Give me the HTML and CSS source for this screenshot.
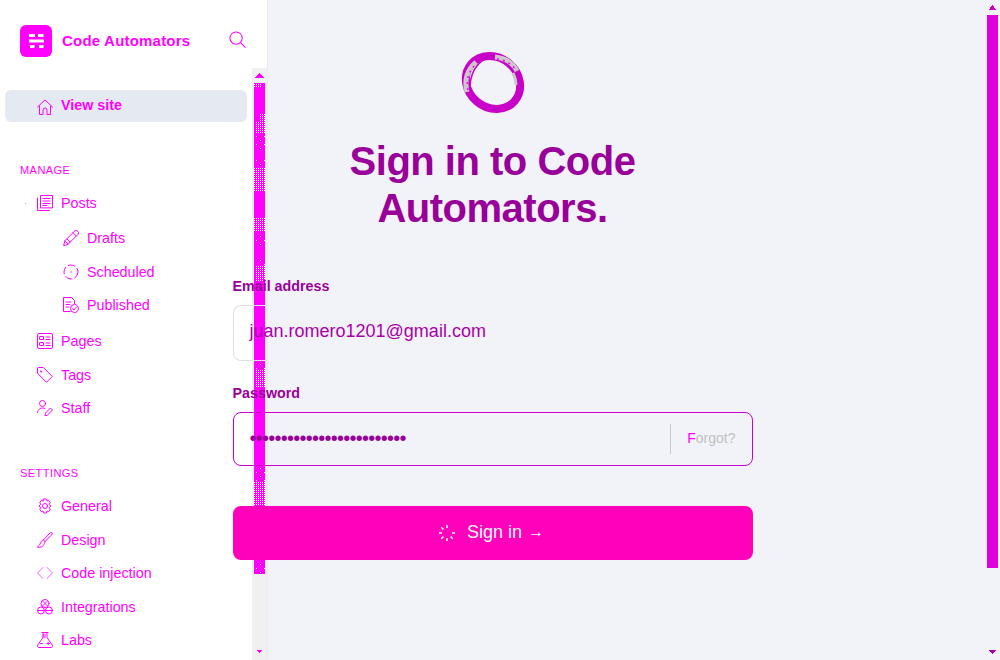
FILE: index.html
```html
<!DOCTYPE html>
<html lang="en">
<head>
<meta charset="utf-8">
<title>Code Automators</title>
<link rel="stylesheet" href="styles.css">
</head>
<body>
<div class="app">
  <aside class="sidebar">
    <header class="brand">
      <span class="logo">
        <svg viewBox="0 0 32 32" width="32" height="32"><path d="M9 9h6v3H9zM18 9h5.500v3H18zM9 14.500h15v3H9zM10 20h4.500v3H10zM19 20h4.500v3H19z" fill="#fff"/></svg>
      </span>
      <span class="brand-name">Code Automators</span>
      <svg class="search" viewBox="0 0 18 18" width="17" height="17"><circle cx="7.500" cy="7.500" r="6.500"/><path d="M12.200 12.200l5.300 5.300"/></svg>
    </header>
    <nav class="nav">
      <a class="row active">
        <svg class="ico" viewBox="0 0 16 16"><path d="M.5 8 8 1l7.500 7M2.500 7v8.500h3.500V11a2 2 0 0 1 4 0v4.500h3.500V7"/></svg>
        <span>View site</span>
      </a>
      <h2 class="section manage">Manage</h2>
      <a class="row">
        <span class="tiny"></span>
        <svg class="ico" viewBox="0 0 16 16"><path d="M3.500 12.500V.5h12v12zM.5 3v12.500h12M6 3.500h7M6 6h7M6 8.500h7M6 10.500h4"/></svg>
        <span>Posts</span>
      </a>
      <div class="sub">
        <a class="row subrow">
          <svg class="ico" viewBox="0 0 16 16"><path d="M.7 15.300l1.200-4.500L11.500 1.200a1.800 1.800 0 0 1 3.300 3.300L5.200 14.100zM2 10.800l3.200 3.300M10 2.700l3.300 3.300M4 9l3 3"/></svg>
          <span>Drafts</span>
        </a>
        <a class="row subrow">
          <svg class="ico" viewBox="0 0 16 16"><circle cx="8" cy="8" r="7" stroke-dasharray="7 3"/><path d="M8 8h.5"/></svg>
          <span>Scheduled</span>
        </a>
        <a class="row subrow">
          <svg class="ico" viewBox="0 0 16 16"><path d="M7 14.500H.5V.5h8l3 3v3M3 5h5M3 7.500h4M3 10h3"/><circle cx="11.500" cy="11.500" r="4"/><path d="M9.500 11.800l1.500 1.200 2.500-3"/></svg>
          <span>Published</span>
        </a>
      </div>
      <a class="row">
        <svg class="ico" viewBox="0 0 16 16"><rect x=".5" y=".5" width="15" height="15" rx="1.500"/><path d="M3 3.500h3.500v3H3zM3 9.500h3.500v3H3zM9 4h4M9 6.500h4M9 10h4M9 12.500h4"/></svg>
        <span>Pages</span>
      </a>
      <a class="row">
        <svg class="ico" viewBox="0 0 16 16"><path d="M.5 1.500v4.800l9 9 5.800-5.800-9-9H1.500z"/><circle cx="4" cy="4.500" r=".7"/></svg>
        <span>Tags</span>
      </a>
      <a class="row">
        <svg class="ico" viewBox="0 0 16 16"><circle cx="5.500" cy="3.500" r="3"/><path d="M.5 12.500a5 5 0 0 1 7.500-4M8 15.500l.5-2.500 5-5 2 2-5 5z"/></svg>
        <span>Staff</span>
      </a>
      <h2 class="section settings">Settings</h2>
      <a class="row">
        <svg class="ico" viewBox="0 0 16 16"><circle cx="8" cy="8" r="2.500"/><path d="M6.500 1h3l.5 2 1.700-.6 1.600 2.400-1.300 1.500L14 8l-2 1.700 1.300 1.500-1.600 2.400L10 13l-.5 2h-3L6 13l-1.700.6-1.600-2.400L4 9.700 2 8l2-1.700-1.300-1.500 1.600-2.400L6 3z"/></svg>
        <span>General</span>
      </a>
      <a class="row">
        <svg class="ico" viewBox="0 0 16 16"><path d="M15 .8c.6.6.4 1.300-.2 2L8 9.500 6.300 8 13 1c.7-.6 1.400-.7 2-.2zM6.300 8C4 8.500 4 10.500 3 12c-.7 1-1.500 1.500-2.500 3.300 3 .2 5-.3 6-2 .6-1 1-2.200 1.500-3.800"/></svg>
        <span>Design</span>
      </a>
      <a class="row">
        <svg class="ico ico-light" viewBox="0 0 16 16"><path d="M6 2.500.5 8 6 13.500M10 2.500 15.500 8 10 13.500"/></svg>
        <span>Code injection</span>
      </a>
      <a class="row">
        <svg class="ico" viewBox="0 0 16 16"><circle cx="8" cy="4.500" r="4"/><path d="M5.500 2l5 5M10.500 2l-5 5"/><circle cx="4" cy="11.500" r="3.500"/><circle cx="12" cy="11.500" r="3.500"/><path d="M1 11.500h6M9 11.500h6"/></svg>
        <span>Integrations</span>
      </a>
      <a class="row">
        <svg class="ico" viewBox="0 0 16 16"><path d="M5 .5h6M6 .5v5L.8 13c-.8 1.300 0 2.500 1.200 2.500h12c1.200 0 2-1.200 1.200-2.500L10 5.500v-5M6 3h2.500M6 5h2.500M3.500 11.500h2M10 11.500h2.500M11.200 10.500v2"/></svg>
        <span>Labs</span>
      </a>
    </nav>
    <div class="side-scroll">
      <svg class="side-thumb" viewBox="0 0 15 592" width="15" height="592" shape-rendering="crispEdges">
        <defs>
          <pattern id="dots" width="2" height="2" patternUnits="userSpaceOnUse"><rect width="1" height="1" fill="#fff"/></pattern>
          <pattern id="sparse" width="8" height="8" patternUnits="userSpaceOnUse"><rect width="1" height="1" fill="#fff"/><rect x="4" y="4" width="1" height="1" fill="#fff"/></pattern>
        </defs>
        <path d="M7.500 5 3 10h9z" fill="#f0f"/>
        <rect x="2" y="15" width="11" height="491" fill="#f0f"/>
        <rect x="2" y="15" width="8" height="5" fill="url(#dots)"/>
        <rect x="8" y="46" width="5" height="8" fill="url(#dots)"/>
        <rect x="4" y="54" width="9" height="12" fill="url(#dots)"/>
        <rect x="2" y="66" width="11" height="16" fill="url(#sparse)"/>
        <rect x="4" y="92" width="9" height="8" fill="url(#sparse)"/>
        <rect x="2" y="100" width="11" height="24" fill="url(#dots)"/>
        <rect x="2" y="150" width="11" height="14" fill="url(#dots)"/>
        <rect x="2" y="166" width="11" height="14" fill="url(#sparse)"/>
        <rect x="6" y="190" width="7" height="8" fill="url(#sparse)"/>
        <rect x="4" y="198" width="9" height="16" fill="url(#dots)"/>
        <rect x="2" y="294" width="11" height="8" fill="url(#sparse)"/>
        <rect x="4" y="302" width="9" height="18" fill="url(#dots)"/>
        <rect x="4" y="400" width="9" height="14" fill="url(#sparse)"/>
        <rect x="2" y="414" width="11" height="24" fill="url(#dots)"/>
        <rect x="2" y="493" width="11" height="12" fill="url(#sparse)"/>
        <path d="M4.500 582h6l-3 3.500z" fill="#f0f"/>
      </svg>
    </div>
  </aside>
  <main class="main">
    <section class="panel">
      <svg class="mark" viewBox="0 0 68 62" width="68" height="62">
        <ellipse class="ring-base" cx="34" cy="30.500" rx="28.500" ry="25" transform="rotate(40 34 30.500)"/>
        <path class="ring-gray" d="M8 40C5 28 8 18 17 10"/>
        <path class="ring-gray" d="M36 5c10 1 18 6 22 14"/>
        <path class="ring-gray slim" d="M54 21c2 4 3 8 3 12"/>
        <path class="ring-speck" d="M9 38C7 28 9 19 18 11"/>
        <path class="ring-speck" d="M38 7c8 1 15 5 19 11"/>
        <path class="ring-line" d="M12 44C9 30 13 13 28 6"/>
      </svg>
      <h1 class="title">Sign in to Code<br>Automators.</h1>
      <form class="form">
        <label class="label">Email address</label>
        <div class="field field-email"><span class="value">juan.romero1201@gmail.com</span></div>
        <label class="label label-pass">Password</label>
        <div class="field field-pass">
          <span class="value dots">•••••••••••••••••••••••••</span>
          <span class="forgot"><span class="forgot-text"><span class="f">F</span>orgot?</span></span>
        </div>
        <button class="submit" type="button">
          <svg class="spin" viewBox="0 0 18 18" width="18" height="18"><path d="M9 1v3M3.300 3.300l2.100 2.100M1 9h3M3.300 14.700l2.100-2.100M9 14v3M14.700 14.700l-2.100-2.100M14 9h3"/></svg>
          <span class="submit-text">Sign in <span class="arrow">→</span></span>
        </button>
      </form>
    </section>
    <div class="page-scroll">
      <svg viewBox="0 0 15 660" width="15" height="660" shape-rendering="crispEdges">
        <path d="M7.500 5 3.500 10h8z" fill="#c0c"/>
        <rect x="2" y="15" width="11" height="553" fill="#e000e0"/>
        <path d="M3.500 650h8l-4 4.500z" fill="#a0a"/>
      </svg>
    </div>
  </main>
</div>
</body>
</html>
```
FILE: styles.css
```css
* { box-sizing: border-box; }
html, body { margin: 0; height: 100%; overflow: hidden; }
body { font-family: "Liberation Sans", Arial, sans-serif; background: #f1f3f8; color: #f0f; }
.app { position: relative; width: 1000px; height: 660px; display: flex; }
.sidebar { position: relative; width: 268px; height: 660px; flex: none; background: #fff; border-right: 1px solid #e8ebf2; }
.brand { display: flex; align-items: center; height: 68px; padding: 14px 20px 0 20px; }
.logo { width: 32px; height: 32px; flex: none; background: #f0f; border-radius: 6px; display: flex; }
.brand-name { flex: 1; margin-left: 10px; padding-bottom: 2px; font-size: 15px; font-weight: 700; letter-spacing: .2px; }
.search { fill: none; stroke: #f0f; stroke-width: 1.100; margin-right: 1px; margin-top: -3px; }
.nav { display: flex; flex-direction: column; padding: 22px 20px 0 5px; }
.row { display: flex; align-items: center; height: 33.600px; padding-left: 32px; font-size: 14.300px; position: relative; }
.ico { width: 16px; height: 16px; margin-right: 8px; flex: none; fill: none; stroke: #f0f; stroke-width: 1; stroke-linejoin: round; stroke-linecap: round; }
.ico-light { stroke-width: .8; opacity: .8; }
.row.active { height: 32px; padding-bottom: 2px; background: #e5e9f1; border-radius: 6px; font-weight: 700; }
.row.active .ico { margin-top: 3px; }
.section { margin: 0; padding-left: 15px; font-size: 11px; font-weight: 400; letter-spacing: .45px; text-transform: uppercase; line-height: 13px; }
.section.manage { margin-top: 42px; margin-bottom: 9px; }
.section.settings { margin-top: 42px; margin-bottom: 9px; }
.tiny { position: absolute; left: 20px; top: 17px; width: 1px; height: 1px; background: #e9a0e9; }
.sub { display: flex; flex-direction: column; margin-top: 2px; margin-bottom: 2.300px; }
.subrow { height: 33.500px; padding-left: 58px; }
.side-scroll { position: absolute; top: 68px; left: 252px; width: 15px; height: 592px; background: #f0f0f0; }
.side-thumb { display: block; }
.main { position: absolute; inset: 0; display: flex; pointer-events: none; }
.panel { flex: 1; display: flex; flex-direction: column; align-items: center; padding-top: 52px; }
.mark { display: block; flex: none; }
.ring-base { fill: none; stroke: #c800c8; stroke-width: 8; }
.ring-gray { fill: none; stroke: #c9c9c9; stroke-width: 5; }
.ring-gray.slim { stroke-width: 3; }
.ring-speck { fill: none; stroke: #f0f; stroke-width: 1.500; stroke-dasharray: 2 4; }
.ring-line { fill: none; stroke: #c800c8; stroke-width: 1.500; }
.title { margin: 24px 0 0; font-size: 40px; line-height: 47px; font-weight: 700; letter-spacing: -.5px; text-align: center; color: #909; }
.form { width: 520px; margin-top: 46px; display: flex; flex-direction: column; }
.label { font-size: 14.300px; font-weight: 700; line-height: 16px; color: #909; }
.label-pass { margin-top: 26px; }
.field { position: relative; height: 54px; margin-top: 11px; padding: 0 16px; display: flex; align-items: center; border-radius: 8px; font-size: 18px; color: #a0a; }
.value { padding-bottom: 2px; }
.field-email { padding-left: 17px; }
.field-email::before { content: ""; position: absolute; left: 0; top: 0; width: 33px; height: 100%; border: 1px solid #e0e0e0; border-right: 0; border-radius: 8px 0 0 8px; }
.field-pass { border: 1px solid #c0c; justify-content: space-between; }
.dots { color: #909; font-size: 20px; letter-spacing: -.75px; }
.forgot { height: 30px; display: flex; align-items: center; padding-left: 16px; border-left: 1px solid #c8c8c8; font-size: 14px; color: #c0c0c0; }
.forgot-text { padding-bottom: 2px; }
.f { color: #f0f; }
.submit { height: 54px; margin-top: 40px; border: 0; border-radius: 8px; background: #ff00bb; color: #fff; font: 18px "Liberation Sans", Arial, sans-serif; display: flex; align-items: center; justify-content: center; gap: 11px; padding: 0 3px 0 0; }
.submit-text { padding-bottom: 2px; }
.arrow { font-size: 16px; vertical-align: 1px; margin-left: 1px; }
.spin { fill: none; stroke: #fff; stroke-width: 1.500; }
.page-scroll { width: 15px; flex: none; }
.page-scroll svg { display: block; }
```
